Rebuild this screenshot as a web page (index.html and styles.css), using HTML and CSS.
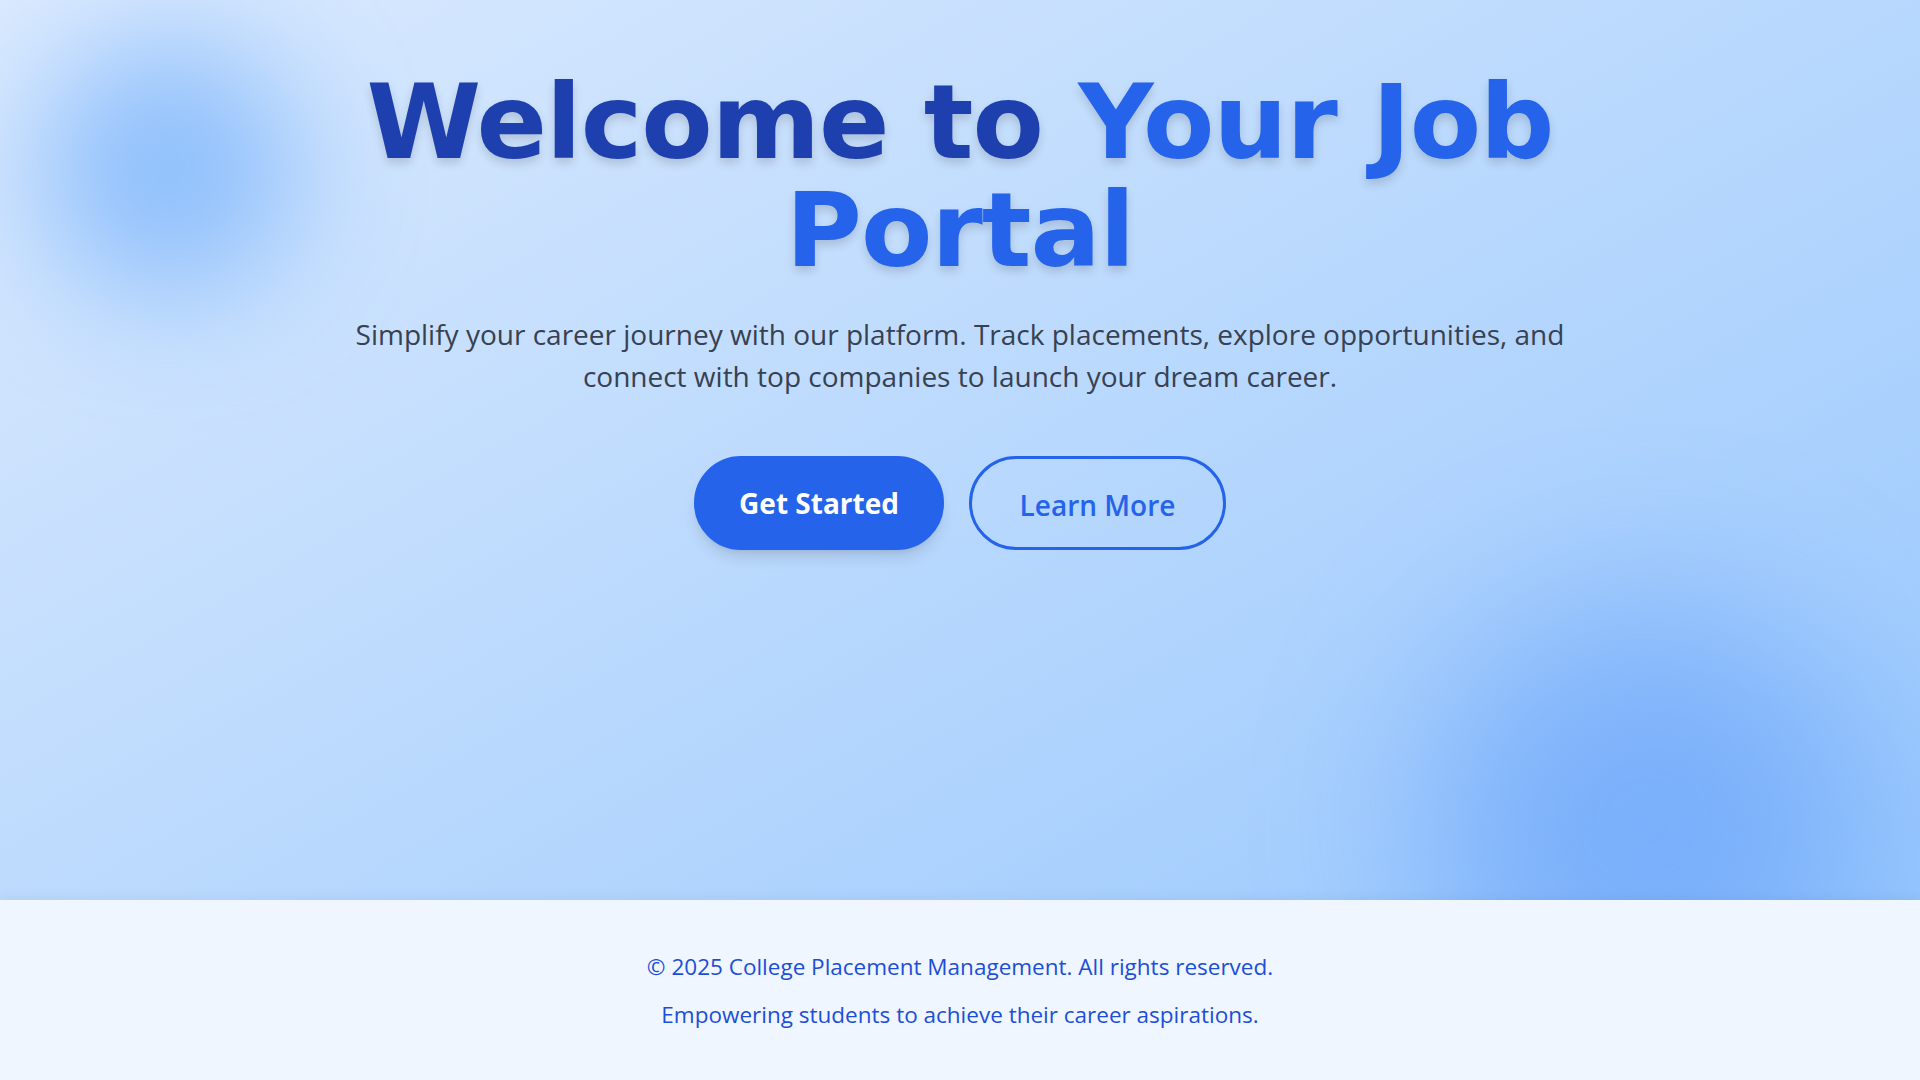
FILE: index.html
```html
<!DOCTYPE html>
<html lang="en">
<head>
<meta charset="utf-8">
<title>Job Portal</title>
<link rel="stylesheet" href="styles.css">
</head>
<body>
<div class="page">
  <div class="blob blob-tl"></div>
  <div class="blob blob-br"></div>
  <main class="hero">
    <h1 class="title"><span class="title-dark">Welcome to</span> <span class="title-accent">Your Job</span> <span class="title-accent">Portal</span></h1>
    <p class="subtitle">Simplify your career journey with our platform. Track placements, explore opportunities, and connect with top companies to launch your dream career.</p>
    <div class="actions">
      <a class="btn btn-primary" href="#">Get Started</a>
      <a class="btn btn-outline" href="#">Learn More</a>
    </div>
  </main>
  <footer class="footer">
    <p class="footer-line">© 2025 College Placement Management. All rights reserved.</p>
    <p class="footer-line">Empowering students to achieve their career aspirations.</p>
  </footer>
</div>
</body>
</html>
```
FILE: styles.css
```css
* { box-sizing: border-box; }
html, body { margin: 0; padding: 0; }
body {
  font-family: "Open Sans", "Noto Sans", sans-serif;
  width: 1920px;
  height: 1080px;
  overflow: hidden;
}
.page {
  position: relative;
  height: 1080px;
  display: flex;
  flex-direction: column;
  background: linear-gradient(to bottom right, #dbeafe, #93c5fd);
  overflow: hidden;
}
.blob {
  position: absolute;
  border-radius: 50%;
  pointer-events: none;
}
.blob-tl {
  top: 40px;
  left: 40px;
  width: 256px;
  height: 256px;
  background: #60a5fa;
  filter: blur(64px);
  opacity: 0.6;
}
.blob-br {
  bottom: 40px;
  right: 56px;
  width: 440px;
  height: 440px;
  background: #3b82f6;
  filter: blur(90px);
  opacity: 0.38;
}
.hero {
  position: relative;
  height: 900px;
  display: flex;
  flex-direction: column;
  align-items: center;
  text-align: center;
  padding-top: 68px;
}
.title {
  margin: 0;
  max-width: 1240px;
  font-family: "DejaVu Sans", sans-serif;
  font-weight: 700;
  font-size: 104px;
  line-height: 108px;
  letter-spacing: -1px;
  text-shadow: 0 5px 10px rgba(0, 0, 0, 0.15);
}
.title-dark { color: #1e40af; }
.title-accent { color: #2563eb; }
.subtitle {
  margin: 29px 0 0;
  max-width: 1240px;
  font-size: 28px;
  line-height: 42px;
  color: #374151;
}
.actions {
  display: flex;
  gap: 25px;
  margin-top: 59px;
}
.btn {
  display: flex;
  align-items: center;
  justify-content: center;
  height: 94px;
  border-radius: 47px;
  border: 3px solid #2563eb;
  font-size: 28px;
  text-decoration: none;
}
.btn-primary {
  width: 250px;
  background: #2563eb;
  color: #ffffff;
  font-weight: 700;
  box-shadow: 0 10px 15px -3px rgba(0, 0, 0, 0.12), 0 4px 6px -4px rgba(0, 0, 0, 0.1);
}
.btn-outline {
  width: 257px;
  background: transparent;
  color: #2563eb;
  font-weight: 600;
  padding-top: 4px;
}
.footer {
  position: relative;
  flex: 1;
  background: #eff6ff;
  box-shadow: 0 -4px 10px rgba(0, 0, 0, 0.04);
  text-align: center;
  padding-top: 53px;
  color: #1d4ed8;
}
.footer-line {
  margin: 0 0 20px;
  font-size: 22.5px;
  line-height: 28px;
}
```
